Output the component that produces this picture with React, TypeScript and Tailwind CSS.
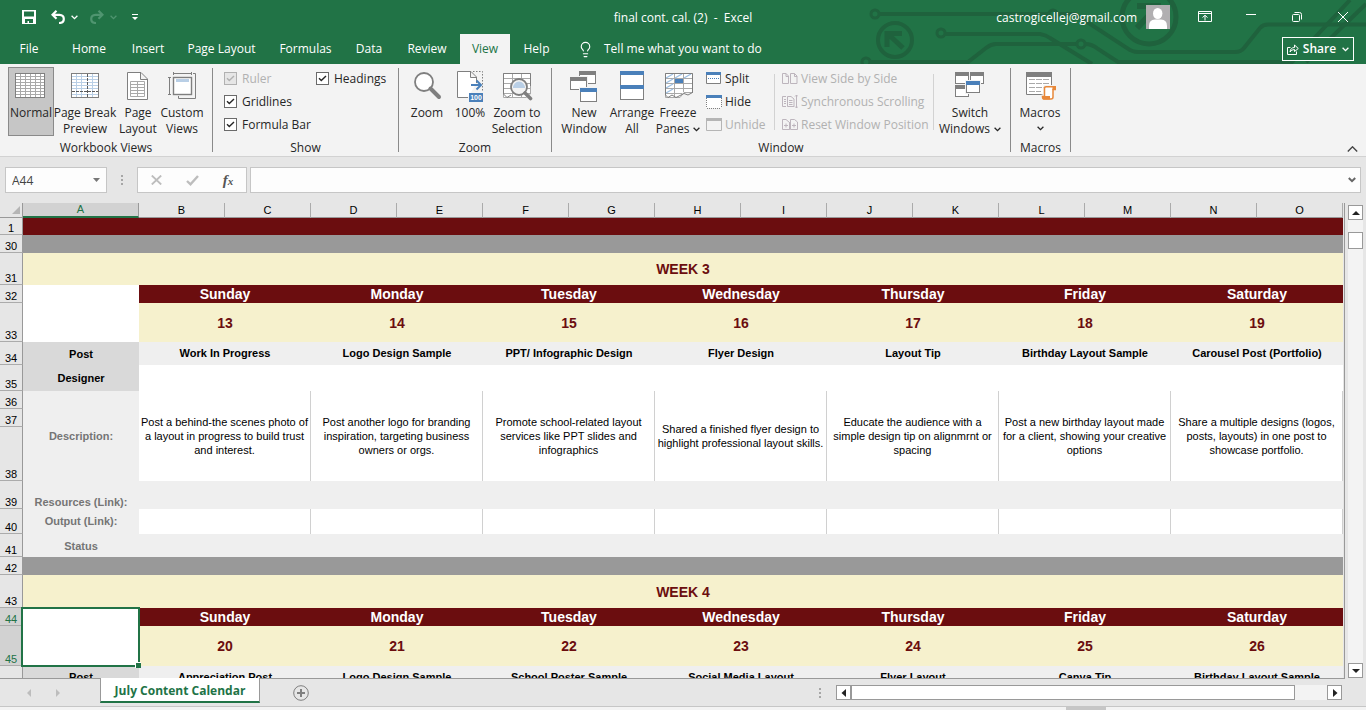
import React from 'react';
import { Lightbulb } from 'lucide-react';

const TABS = [
  { name: 'File', width: 'w-[58px]' },
  { name: 'Home', width: 'w-[62px]' },
  { name: 'Insert', width: 'w-[56px]' },
  { name: 'Page Layout', width: 'w-[91px]' },
  { name: 'Formulas', width: 'w-[77px]' },
  { name: 'Data', width: 'w-[50px]' },
  { name: 'Review', width: 'w-[66px]' },
  { name: 'View', width: 'w-[50px]' },
  { name: 'Help', width: 'w-[53px]' },
];

const COLUMNS = ['B', 'C', 'D', 'E', 'F', 'G', 'H', 'I', 'J', 'K', 'L', 'M', 'N', 'O'];
const DAYS = ['Sunday', 'Monday', 'Tuesday', 'Wednesday', 'Thursday', 'Friday', 'Saturday'];

const WEEK3 = {
  dates: [13, 14, 15, 16, 17, 18, 19],
  posts: [
    'Work In Progress',
    'Logo Design Sample',
    'PPT/ Infographic Design',
    'Flyer Design',
    'Layout Tip',
    'Birthday Layout Sample',
    'Carousel Post (Portfolio)',
  ],
  descriptions: [
    'Post a behind-the scenes photo of\na layout in progress to build trust\nand interest.',
    'Post another logo for branding\ninspiration, targeting business\nowners or orgs.',
    'Promote school-related layout\nservices like PPT slides and\ninfographics',
    'Shared a finished flyer design to\nhighlight professional layout skills.',
    'Educate the audience with a\nsimple design tip on alignmrnt or\nspacing',
    'Post a new birthday layout made\nfor a client, showing your creative\noptions',
    'Share a multiple designs (logos,\nposts, layouts) in one post to\nshowcase portfolio.',
  ],
};

const WEEK4 = {
  dates: [20, 21, 22, 23, 24, 25, 26],
  posts: [
    'Appreciation Post',
    'Logo Design Sample',
    'School Poster Sample',
    'Social Media Layout',
    'Flyer Layout',
    'Canva Tip',
    'Birthday Layout Sample',
  ],
};

/* ---------- Icons ---------- */

const GRAY = '#7f7f7f';
const BLUE = '#4a80ba';

const Chevron = ({ className = '' }: { className?: string }) => (
  <svg viewBox="0 0 7 5" className={`w-[7px] h-[5px] inline-block shrink-0 ${className}`} fill="none" stroke="currentColor" strokeWidth="1.3">
    <path d="M.6 .8 3.5 3.7 6.4 .8" />
  </svg>
);

const Icon32 = ({ children }: { children: React.ReactNode }) => (
  <svg viewBox="0 0 32 32" className="w-8 h-8 shrink-0" fill="none" stroke={GRAY}>
    {children}
  </svg>
);

const NormalIcon = () => (
  <Icon32>
    <rect x=".5" y="3.5" width="29" height="24" fill="#fff" />
    <path stroke="#a9a9a9" d="M1 6.5H29M1 9.5H29M1 12.5H29M1 15.5H29M1 18.5H29M1 21.5H29M1 24.5H29M5.5 4V27M10.5 4V27M15.5 4V27M20.5 4V27M25.5 4V27" />
    <rect x=".5" y="3.5" width="29" height="24" />
  </Icon32>
);

const PageBreakIcon = () => (
  <Icon32>
    <rect x="2.5" y="3.5" width="27" height="24" fill="#fff" />
    <path stroke="#b9cfe6" d="M3 6.5H29M3 9.5H29M3 12.5H29M3 15.5H29M3 18.5H29M3 24.5H29M7.5 4V27M12.5 4V27M23.5 4V27" />
    <path stroke="#5b5b5b" strokeDasharray="3 1" d="M18.5 4V27M3 21.5H29" />
    <rect x="2.5" y="3.5" width="27" height="24" />
  </Icon32>
);

const PageLayoutIcon = () => (
  <Icon32>
    <path fill="#fff" d="M5.5 2.5H19L25.5 9V29.5H5.5ZM18.5 2.5V9.5H25.5" />
    <path stroke="#a9a9a9" d="M8.5 11.5H22.5V26.5H8.5ZM8.5 14.5H22.5M8.5 17.5H22.5M8.5 20.5H22.5M8.5 23.5H22.5M15.5 11V27" />
  </Icon32>
);

const CustomViewsIcon = () => (
  <Icon32>
    <path d="M2 7.5H5M3.5 7.5V24.5M2 24.5H5M7.5 2V5M7.5 3.5H25.5M25.5 2V5" />
    <rect x="7.5" y="7.5" width="18" height="17" fill="#fff" strokeWidth="1.4" />
    <path fill="#b9cfe6" stroke="none" d="M10 9H23V12H10Z" />
    <path d="M27 3.5H29.5V28.5H12.5V26" />
  </Icon32>
);

const ZoomIcon = () => (
  <Icon32>
    <circle cx="13" cy="12" r="9" fill="#fff" strokeWidth="1.8" />
    <path d="M19.5 18.5 28 27" strokeWidth="4" strokeLinecap="round" />
  </Icon32>
);

const HundredIcon = () => (
  <Icon32>
    <path fill="#fff" d="M14 27.5H3.5V1.5H17L22.5 7V13M16.5 1.5V7.5H22.5" />
    <path strokeDasharray="1.5 1.5" d="M19 1.5H28.5V22" />
    <path stroke={BLUE} strokeWidth="2" d="M17 15H27M22.5 10.5 27 15 22.5 19.5" />
    <rect x="15" y="23" width="14" height="9" fill={BLUE} stroke="none" />
    <text x="22" y="30" textAnchor="middle" fill="#fff" stroke="none" fontSize="7" fontWeight="700" fontFamily="Liberation Sans, sans-serif">
      100
    </text>
  </Icon32>
);

const ZoomSelectionIcon = () => (
  <Icon32>
    <path fill="#fff" stroke="#a9a9a9" d="M2.5 3.5H29.5V24L25 27.5H2.5ZM3 8.5H29M3 13.5H29M3 18.5H29M3 23.5H29M11.5 4V27M20.5 4V27" />
    <path d="M2.5 24V3.5H29.5V16M2.5 24 6 27.5 10 25" />
    <circle cx="18" cy="17" r="8" fill="#f3f3f3" strokeWidth="1.8" />
    <path fill="#b9cfe6" stroke="none" d="M12 18A6 6.5 0 0 1 24 18Z" />
    <path d="M24 23 29.5 28.5" strokeWidth="3.6" strokeLinecap="round" />
  </Icon32>
);

const MiniWindow = ({ x, y, w = 17, h = 13, bar = GRAY }: { x: number; y: number; w?: number; h?: number; bar?: string }) => (
  <>
    <rect x={x - 1} y={y - 1} width={w + 2} height={h + 2} fill="#f3f3f3" stroke="none" />
    <rect x={x + 0.5} y={y + 0.5} width={w - 1} height={h - 1} fill="#fff" />
    <rect x={x} y={y} width={w} height="4" fill={bar} stroke="none" />
  </>
);

const NewWindowIcon = () => (
  <Icon32>
    <MiniWindow x={11} y={1} />
    <MiniWindow x={2} y={7} />
    <MiniWindow x={12} y={18} bar={BLUE} h={14} />
  </Icon32>
);

const ArrangeIcon = () => (
  <Icon32>
    <rect x="4.5" y="1.5" width="23" height="28" fill="#fff" />
    <path fill={BLUE} stroke="none" d="M4 1H28V5H4ZM4 15H28V19H4Z" />
  </Icon32>
);

const FreezeIcon = () => (
  <Icon32>
    <path fill="#fff" stroke="#a9a9a9" d="M3.5 3.5H30.5V22.5H22L18 27.5H3.5ZM4 8.5H30M4 13.5H30M4 18.5H30M4 23.5H20M12.5 4V27M21.5 4V22" />
    <path stroke="#9dbfe2" strokeWidth="1.4" d="M4 8 11 4M13 8 20 4M22 8 29 4M4 13 11 9M4 18 11 14M4 23 11 19" />
    <path fill={BLUE} stroke="none" d="M13 9H21V13H13Z" />
    <path d="M3.5 25V3.5H30.5V23M3.5 25 6 27.5 10 25 14 27.5 22 23.5 26 25 30.5 22.5" />
  </Icon32>
);

const SwitchIcon = () => (
  <Icon32>
    <MiniWindow x={1} y={2} w={14} h={12} />
    <MiniWindow x={16} y={2} w={14} h={12} />
    <MiniWindow x={1} y={15} w={14} h={12} />
    <MiniWindow x={12} y={11} w={14} h={12} bar={BLUE} />
  </Icon32>
);

const MacrosIcon = () => (
  <Icon32>
    <path fill="#fff" d="M2.5 2.5H27.5V24.5H2.5Z" />
    <path fill={GRAY} stroke="none" d="M2 2H28V7H2Z" />
    <path stroke="#a9a9a9" strokeDasharray="6 1" d="M5 9.5H25M5 13.5H25M5 17.5H20M5 21.5H17" />
    <path stroke="#f3f3f3" strokeWidth="3" fill="#fff" d="M21 16.5H31V20H30V29H19V26H20Z" />
    <path stroke="#e8883a" strokeWidth="1.5" fill="#fff" d="M22 16.8H31.2V19.5H29V27Q29 29 27 29H20Q18.5 29 18.5 26.5H20.5V18Q20.5 16.8 22 16.8Z" />
    <path fill="#e8883a" stroke="none" d="M18 26H26V29.5H19ZM28.5 16H32V20H28.5Z" />
  </Icon32>
);

const Icon16 = ({ children }: { children: React.ReactNode }) => (
  <svg viewBox="0 0 16 16" className="w-4 h-4 shrink-0" fill="none" stroke={GRAY}>
    {children}
  </svg>
);

const SplitIcon = () => (
  <Icon16>
    <path fill="#fff" d="M.5 1.5H14.5V12.5H.5Z" />
    <path fill={BLUE} stroke="none" d="M0 1H15V4H0Z" />
    <path stroke={BLUE} strokeDasharray="1 1" d="M2 7.5H14" />
  </Icon16>
);

const HideIcon = () => (
  <Icon16>
    <path fill="#fff" stroke="none" d="M0 3H15V14H0Z" />
    <path strokeDasharray="1 1" d="M.5 4V14M1 14.5H15M15.5 4V14" />
    <path fill={BLUE} stroke="none" d="M0 1H16V4H0Z" />
  </Icon16>
);

const UnhideIcon = () => (
  <Icon16>
    <path stroke="#b5b5b5" d="M.5 1.5H15.5V13.5H.5Z" />
    <path fill="#b5b5b5" stroke="none" d="M0 1H16V4H0Z" />
  </Icon16>
);

const SideBySideIcon = () => (
  <Icon16>
    <path stroke="#bdb5bd" d="M.5 2.5H4L6.5 5V12.5H.5ZM4 2.5V5.5H6.5M8.5 2.5H12.5L15 5V12.5H8.5ZM12.5 2.5V5.5H15" />
  </Icon16>
);

const SyncScrollIcon = () => (
  <Icon16>
    <path stroke="#bdb5bd" d="M4 2.5H.5V12.5H4M2 5.5H4M2 7.5H4M2 9.5H4M5.5 2.5H9L12 5V12.5H5.5ZM7 6.5H10.5M7 8.5H10.5M7 10.5H10.5M14.5 1V14M13 2.5 14.5 1 16 2.5M13 12.5 14.5 14 16 12.5" />
  </Icon16>
);

const ResetPositionIcon = () => (
  <Icon16>
    <path stroke="#bdb5bd" d="M.5 2.5H4L7.5 5.5V12.5H.5ZM7.500 12.500V5M8.5 2.5H12.5L15.5 5V12.5H8.5ZM2 8.500H6M4 6.500V10.500M10 8.500H14M12 6.500V10.500" />
  </Icon16>
);

/* ---------- Title bar ---------- */

const Circuit = () => (
  <svg viewBox="0 0 516 64" className="absolute right-0 top-0 w-[516px] h-16" fill="none" stroke="#1f623d" strokeWidth="4">
    <circle cx="25" cy="14" r="4" strokeWidth="3" />
    <path d="M29 14H199" />
    <circle cx="203" cy="14" r="4" strokeWidth="3" />
    <path d="M207 14H225L277 48Q282 52 288 52H385Q391 52 394 48L410 28Q413 24.500 418 24.500H516" />
    <circle cx="91" cy="33" r="4" strokeWidth="3" />
    <path d="M95 34H190Q196 35 200 38L242 64" />
    <circle cx="16" cy="62" r="4" strokeWidth="3" />
    <path d="M20 62H118L136 48Q141 44 146 44H226" />
    <circle cx="231" cy="44" r="4" strokeWidth="3" />
    <path d="M235 44Q242 44 248 49L268 62H442L500 0M456 62 516 4" />
    <circle cx="45" cy="40" r="17" />
    <path strokeWidth="5" d="M37 47V33.500H52M38 34 53 48" />
    <circle cx="299" cy="17" r="27" strokeWidth="5" />
    <path strokeWidth="6" d="M287 6H308V22M307 7 287 28" />
  </svg>
);

const TitleBar = () => (
  <header className="relative bg-[#217346] text-white shrink-0">
    <Circuit />
    <div className="relative grid grid-cols-[1fr_auto_1fr] h-[34px] items-center">
      <div className="flex items-center pl-[22px]">
        <button aria-label="Save">
          <svg viewBox="0 0 14 14" className="w-3.5 h-3.5" fill="currentColor" fillRule="evenodd">
            <path d="M0 0H14V14H0ZM2 1.500V6.500H12V1.500ZM3 9V13H5.500V11H7V13H11V9Z" />
          </svg>
        </button>
        <button aria-label="Undo" className="flex items-center gap-1.5 ml-[15px]">
          <svg viewBox="0 0 14 14" className="w-3.5 h-3.5" fill="none" stroke="currentColor" strokeWidth="2.200">
            <path d="M5.500 .8 1.500 4.800 5.500 8.800M1.500 4.800H8.500Q12.800 5 12.800 9T8 13" />
          </svg>
          <Chevron />
        </button>
        <button aria-label="Redo" className="flex items-center gap-1.5 ml-3 text-[#4f9570]">
          <svg viewBox="0 0 14 14" className="w-3.5 h-3.5" fill="none" stroke="currentColor" strokeWidth="2.200">
            <path d="M8.500 .8 12.500 4.800 8.500 8.800M12.500 4.800H5.500Q1.200 5 1.200 9T6 13" />
          </svg>
          <Chevron />
        </button>
        <button aria-label="Customize Quick Access Toolbar" className="ml-[15px]">
          <svg viewBox="0 0 6 6" className="w-1.5 h-1.5" fill="currentColor">
            <path d="M0 0H6V1H0ZM0 3H6L3 6Z" />
          </svg>
        </button>
      </div>
      <div className="pt-0.5 whitespace-pre">final cont. cal. (2)  -  Excel</div>
      <div className="flex items-center justify-end">
        <span className="pt-0.5">castrogicellej@gmail.com</span>
        <svg viewBox="0 0 24 24" className="w-6 h-6 ml-[9px] mr-3" fill="#fff">
          <rect width="24" height="24" fill="#b1afb1" />
          <ellipse cx="11.700" cy="8.500" rx="4.700" ry="5.500" />
          <path d="M3 24V21Q3 14.500 9 14.500H15Q21 14.500 21 21V24Z" />
        </svg>
        <button aria-label="Ribbon Display Options" className="w-[46px] flex justify-center">
          <svg viewBox="0 0 14 12" className="w-3.5 h-3" fill="none" stroke="currentColor">
            <path d="M.5 .5H13.500V10.500H.5ZM.5 2.500H13.500M7 9.500V4.500M4.500 6.500 7 4.300 9.500 6.500" />
          </svg>
        </button>
        <button aria-label="Minimize" className="w-[46px] flex justify-center">
          <svg viewBox="0 0 10 10" className="w-2.5 h-2.5" stroke="currentColor">
            <path d="M0 2.500H10" />
          </svg>
        </button>
        <button aria-label="Restore" className="w-[46px] flex justify-center">
          <svg viewBox="0 0 10 10" className="w-2.5 h-2.5" fill="none" stroke="currentColor">
            <rect x=".5" y="2.500" width="7" height="7" rx="1" />
            <path d="M2.500 .5H7.500Q9.500 .5 9.500 2.500V7.500" />
          </svg>
        </button>
        <button aria-label="Close" className="w-[46px] flex justify-center">
          <svg viewBox="0 0 10 10" className="w-2.5 h-2.5" stroke="currentColor">
            <path d="M0 0 10 10M10 0 0 10" />
          </svg>
        </button>
      </div>
    </div>

    <nav className="relative flex h-[30px] items-stretch">
      {TABS.map((tab) => (
        <button
          key={tab.name}
          className={`${tab.width} flex items-center justify-center whitespace-nowrap ${tab.name === 'View' ? 'bg-[#f3f3f3] text-[#217346]' : ''}`}
        >
          {tab.name}
        </button>
      ))}
      <button className="flex items-center gap-2.5 ml-3.5">
        <Lightbulb size={17} strokeWidth={1.6} />
        Tell me what you want to do
      </button>
      <button className="flex items-center justify-center gap-1 h-6 w-[72px] mt-[3px] mr-3 ml-auto border border-white bg-[#217346] font-semibold">
        <svg viewBox="0 0 12 12" className="w-3 h-3" fill="none" stroke="currentColor">
          <path d="M3.500 4.500H.5V11.500H9.500V8.500M3 9Q3.500 4.500 7.500 4.500V2L11.300 5.500 7.500 8.500V6.500Q4.500 6.500 3 9Z" />
        </svg>
        Share
        <Chevron className="ml-0.5" />
      </button>
    </nav>
  </header>
);

/* ---------- Ribbon ---------- */

interface BigButtonProps {
  icon: React.ReactNode;
  lines: string[];
  width: string;
  active?: boolean;
  menu?: boolean;
}

const BigButton = ({ icon, lines, width, active, menu }: BigButtonProps) => (
  <button
    className={`${width} h-[69px] pt-0.5 border flex flex-col items-center whitespace-nowrap leading-4 ${
      active ? 'bg-[#c6c6c6] border-[#8a8a8a]' : 'border-transparent'
    }`}
  >
    {icon}
    <span className="mt-[3px]">{lines[0]}</span>
    {(lines[1] || menu) && (
      <span className="flex items-center gap-1 h-4">
        {lines[1]}
        {menu && <Chevron />}
      </span>
    )}
  </button>
);

const SmallButton = ({ icon, label, disabled }: { icon: React.ReactNode; label: string; disabled?: boolean }) => (
  <button disabled={disabled} className="flex items-center gap-[3px] h-[23px] whitespace-nowrap disabled:text-[#b1b1b1]">
    {icon}
    {label}
  </button>
);

const CheckOption = ({ label, disabled }: { label: string; disabled?: boolean }) => (
  <label className={`flex items-center gap-[5px] h-[23px] whitespace-nowrap ${disabled ? 'text-[#b1b1b1]' : ''}`}>
    <span className="grid size-[13px]">
      <input
        type="checkbox"
        defaultChecked
        disabled={disabled}
        className="peer col-start-1 row-start-1 appearance-none size-[13px] border border-[#6a6a6a] bg-white disabled:border-[#b1b1b1] disabled:bg-[#e6e6e6]"
      />
      <svg
        viewBox="0 0 13 13"
        className="hidden peer-checked:block pointer-events-none col-start-1 row-start-1 size-[13px]"
        fill="none"
        stroke="currentColor"
        strokeWidth="1.4"
      >
        <path d="M3 6.300 5.300 8.600 10 4" />
      </svg>
    </span>
    {label}
  </label>
);

const Group = ({ label, width, children }: { label: string; width: string; children: React.ReactNode }) => (
  <section className={`${width} flex shrink-0`}>
    <div className="flex-1 min-w-0 flex flex-col pt-[3px]">
      <div className="flex h-[69px] mb-1">{children}</div>
      <div className="text-center leading-4">{label}</div>
    </div>
    <div className="w-px h-[84px] mt-1 bg-[#8a8a8a]" />
  </section>
);

const Ribbon = () => (
  <div className="flex h-[93px] shrink-0 bg-[#f3f3f3] border-b border-[#d2d2d2] text-[#262626] overflow-hidden">
    <Group label="Workbook Views" width="w-[213px]">
      <div className="flex pl-2">
        <BigButton icon={<NormalIcon />} lines={['Normal']} width="w-[46px]" active />
        <BigButton icon={<PageBreakIcon />} lines={['Page Break', 'Preview']} width="w-[62px]" />
        <BigButton icon={<PageLayoutIcon />} lines={['Page', 'Layout']} width="w-[44px]" />
        <BigButton icon={<CustomViewsIcon />} lines={['Custom', 'Views']} width="w-[44px]" />
      </div>
    </Group>
    <Group label="Show" width="w-[186px]">
      <div className="grid grid-flow-col grid-rows-3 grid-cols-[92px_auto] pl-[11px]">
        <CheckOption label="Ruler" disabled />
        <CheckOption label="Gridlines" />
        <CheckOption label="Formula Bar" />
        <CheckOption label="Headings" />
      </div>
    </Group>
    <Group label="Zoom" width="w-[153px]">
      <div className="flex pl-[5px]">
        <BigButton icon={<ZoomIcon />} lines={['Zoom']} width="w-[46px]" />
        <BigButton icon={<HundredIcon />} lines={['100%']} width="w-[40px]" />
        <BigButton icon={<ZoomSelectionIcon />} lines={['Zoom to', 'Selection']} width="w-[54px]" />
      </div>
    </Group>
    <Group label="Window" width="w-[459px]">
      <div className="flex pl-2">
        <BigButton icon={<NewWindowIcon />} lines={['New', 'Window']} width="w-[48px]" />
        <BigButton icon={<ArrangeIcon />} lines={['Arrange', 'All']} width="w-[48px]" />
        <BigButton icon={<FreezeIcon />} lines={['Freeze', 'Panes']} width="w-[44px]" menu />
        <div className="w-[74px] pl-1.5">
          <SmallButton icon={<SplitIcon />} label="Split" />
          <SmallButton icon={<HideIcon />} label="Hide" />
          <SmallButton icon={<UnhideIcon />} label="Unhide" disabled />
        </div>
        <div className="w-px h-[56px] mt-[7px] bg-[#d2d2d2]" />
        <div className="w-[158px] pl-[7px]">
          <SmallButton icon={<SideBySideIcon />} label="View Side by Side" disabled />
          <SmallButton icon={<SyncScrollIcon />} label="Synchronous Scrolling" disabled />
          <SmallButton icon={<ResetPositionIcon />} label="Reset Window Position" disabled />
        </div>
        <div className="w-px h-[56px] mt-[7px] mr-1 bg-[#d2d2d2]" />
        <BigButton icon={<SwitchIcon />} lines={['Switch', 'Windows']} width="w-[64px]" menu />
      </div>
    </Group>
    <Group label="Macros" width="w-[60px]">
      <div className="flex pl-[7px]">
        <BigButton icon={<MacrosIcon />} lines={['Macros']} width="w-[44px]" menu />
      </div>
    </Group>
    <button aria-label="Collapse the Ribbon" className="ml-auto mr-2 mb-1 self-end">
      <svg viewBox="0 0 11 6" className="w-[11px] h-1.5" fill="none" stroke="#444" strokeWidth="1.4">
        <path d="M.8 5.400 5.500 .8 10.200 5.400" />
      </svg>
    </button>
  </div>
);

/* ---------- Formula bar ---------- */

const Dots = () => (
  <svg viewBox="0 0 2 10" className="w-0.5 h-2.5 shrink-0" fill="#a6a6a6">
    <path d="M0 0H2V2H0ZM0 4H2V6H0ZM0 8H2V10H0Z" />
  </svg>
);

const FormulaBar = () => (
  <div className="flex items-center shrink-0 h-[46px] pl-[5px] pr-[5px]">
    <div className="flex items-center w-[102px] h-[26px] border border-[#c6c6c6] bg-[#fdfdfd]">
      <input aria-label="Name Box" defaultValue="A44" className="flex-1 min-w-0 pl-1.5 pt-0.5 text-[#444] outline-none" />
      <button aria-label="Name list" className="mr-1.5">
        <svg viewBox="0 0 7 4" className="w-[7px] h-1" fill="#777">
          <path d="M0 0H7L3.500 4Z" />
        </svg>
      </button>
    </div>
    <div className="w-[30px] flex justify-center">
      <Dots />
    </div>
    <div className="flex items-center w-[110px] h-[26px] mr-[3px] border border-[#c6c6c6] bg-[#fdfdfd]">
      <button aria-label="Cancel" className="flex-1 flex justify-center">
        <svg viewBox="0 0 11 10" className="w-[11px] h-2.5" stroke="#bdbdbd" strokeWidth="1.800">
          <path d="M.8 .5 10.200 9.500M10.200 .5 .8 9.500" />
        </svg>
      </button>
      <button aria-label="Enter" className="flex-1 flex justify-center">
        <svg viewBox="0 0 13 11" className="w-[13px] h-[11px]" fill="none" stroke="#bdbdbd" strokeWidth="2.400">
          <path d="M1 6 4.500 9.300 12 1" />
        </svg>
      </button>
      <button aria-label="Insert Function" className="flex-1 font-['Liberation_Serif',serif] italic font-bold text-[#555] leading-none">
        <span className="text-[15px]">f</span>
        <span className="text-[11px]">x</span>
      </button>
    </div>
    <div className="flex flex-1 items-center h-[26px] border border-[#c6c6c6] bg-[#fdfdfd]">
      <input aria-label="Formula Bar" className="flex-1 min-w-0 px-2 outline-none" />
      <button aria-label="Expand Formula Bar" className="mr-1">
        <svg viewBox="0 0 8 6" className="w-2 h-1.5" fill="none" stroke="#666" strokeWidth="2">
          <path d="M.8 1 4 4.200 7.200 1" />
        </svg>
      </button>
    </div>
  </div>
);

/* ---------- Sheet ---------- */

const RowNumber = ({ n, height, selected }: { n: number; height: string; selected?: boolean }) => (
  <th
    scope="row"
    className={`${height} border-r border-b border-r-[#999] border-b-[#ababab] align-bottom font-normal leading-3 ${
      selected ? 'bg-[#d2d2d2] text-[#217346]' : 'bg-[#e6e6e6] text-black'
    }`}
  >
    {n}
  </th>
);

const FullRow = ({ n, height, className, children }: { n: number; height: string; className: string; children?: React.ReactNode }) => (
  <tr>
    <RowNumber n={n} height={height} />
    <td colSpan={15} className={className}>
      {children}
    </td>
  </tr>
);

const DayNames = () =>
  DAYS.map((day) => (
    <td key={day} colSpan={2} className="bg-[#6b0d0f] text-white text-sm font-bold leading-4">
      {day}
    </td>
  ));

const Dates = ({ dates }: { dates: number[] }) =>
  dates.map((date) => (
    <td key={date} colSpan={2} className="bg-[#f6f1cd] text-[#6b0d0f] text-sm font-bold">
      {date}
    </td>
  ));

const Posts = ({ posts }: { posts: string[] }) =>
  posts.map((post) => (
    <td key={post} colSpan={2} className="pb-0.5 bg-[#efefef] font-bold whitespace-nowrap">
      {post}
    </td>
  ));

const SIDE = 'bg-[#efefef] text-[#757575] font-bold';

const Sheet = () => (
  <table className="w-full table-fixed border-separate border-spacing-0 text-center text-[11px] leading-[14px] text-black font-['Liberation_Sans',Arial,sans-serif]">
    <colgroup>
      <col className="w-[23px]" />
      <col className="w-[116px]" />
      {COLUMNS.map((c) => (
        <col key={c} />
      ))}
    </colgroup>
    <thead>
      <tr className="bg-[#e6e6e6]">
        <th className="h-[15px] border-r border-b border-[#999]">
          <svg viewBox="0 0 8 8" className="w-2 h-2 ml-auto mr-0.5" fill="#b5b5b5">
            <path d="M8 0V8H0Z" />
          </svg>
        </th>
        <th scope="col" className="bg-[#d2d2d2] text-[#217346] font-normal leading-[13px] border-r border-r-[#999] border-b-2 border-b-[#217346]">
          A
        </th>
        {COLUMNS.map((c) => (
          <th key={c} scope="col" className="font-normal leading-[14px] border-r border-b border-r-[#ababab] border-b-[#999]">
            {c}
          </th>
        ))}
      </tr>
    </thead>
    <tbody>
      <FullRow n={1} height="h-[17px]" className="bg-[#6b0d0f]" />
      <FullRow n={30} height="h-[18px]" className="bg-[#999]" />
      <FullRow n={31} height="h-[32px]" className="bg-[#f6f1cd] text-[#6b0d0f] text-sm font-bold">
        WEEK 3
      </FullRow>
      <tr>
        <RowNumber n={32} height="h-[18px]" />
        <td rowSpan={2} className="bg-white" />
        <DayNames />
      </tr>
      <tr>
        <RowNumber n={33} height="h-[39px]" />
        <Dates dates={WEEK3.dates} />
      </tr>
      <tr>
        <RowNumber n={34} height="h-[23px]" />
        <td className="bg-[#d9d9d9] font-bold">Post</td>
        <Posts posts={WEEK3.posts} />
      </tr>
      <tr>
        <RowNumber n={35} height="h-[26px]" />
        <td className="bg-[#d9d9d9] font-bold">Designer</td>
        <td colSpan={14} className="bg-white" />
      </tr>
      <tr>
        <RowNumber n={36} height="h-[18px]" />
        <td rowSpan={3} className={SIDE}>
          Description:
        </td>
        {WEEK3.descriptions.map((text) => (
          <td key={text} rowSpan={3} colSpan={2} className="bg-white border-r border-[#d0d0d0] whitespace-pre">
            {text}
          </td>
        ))}
      </tr>
      <tr>
        <RowNumber n={37} height="h-[18px]" />
      </tr>
      <tr>
        <RowNumber n={38} height="h-[54px]" />
      </tr>
      <tr>
        <RowNumber n={39} height="h-[28px]" />
        <td className={`${SIDE} align-bottom`}>Resources (Link):</td>
        <td colSpan={14} className="bg-[#efefef]" />
      </tr>
      <tr>
        <RowNumber n={40} height="h-[25px]" />
        <td className={`${SIDE} pb-0.5`}>Output (Link):</td>
        {DAYS.map((day) => (
          <td key={day} colSpan={2} className="bg-white border-r border-[#d0d0d0]" />
        ))}
      </tr>
      <tr>
        <RowNumber n={41} height="h-[23px]" />
        <td className={SIDE}>Status</td>
        <td colSpan={14} className="bg-[#efefef]" />
      </tr>
      <FullRow n={42} height="h-[18px]" className="bg-[#999]" />
      <FullRow n={43} height="h-[33px]" className="bg-[#f6f1cd] text-[#6b0d0f] text-sm font-bold">
        WEEK 4
      </FullRow>
      <tr>
        <RowNumber n={44} height="h-[18px]" selected />
        <td rowSpan={2} className="relative bg-white">
          {/* selection frame and fill handle */}
          <div className="absolute -top-px -left-0.5 -right-px -bottom-px z-10 border-2 border-[#217346]">
            <span className="absolute -right-[3px] -bottom-[3px] size-1.5 bg-[#217346] border-t border-l border-white" />
          </div>
        </td>
        <DayNames />
      </tr>
      <tr>
        <RowNumber n={45} height="h-[40px]" selected />
        <Dates dates={WEEK4.dates} />
      </tr>
      <tr>
        <RowNumber n={46} height="h-[23px]" />
        <td className="pb-0.5 bg-[#d9d9d9] font-bold">Post</td>
        <Posts posts={WEEK4.posts} />
      </tr>
    </tbody>
  </table>
);

/* ---------- Bottom bar and scroll bars ---------- */

const ScrollButton = ({ label, d }: { label: string; d: string }) => (
  <button aria-label={label} className="size-[15px] shrink-0 flex items-center justify-center border border-[#999] bg-white">
    <svg viewBox="0 0 8 8" className="w-2 h-2" fill="#222">
      <path d={d} />
    </svg>
  </button>
);

const SheetTabs = () => (
  <div className="flex h-7 shrink-0 border-t border-[#999]">
    <div className="w-[100px] flex items-center justify-between pl-[27px] pr-10">
      <button aria-label="Previous sheet">
        <svg viewBox="0 0 4 8" className="w-1 h-2" fill="#bdbdbd">
          <path d="M4 0V8L0 4Z" />
        </svg>
      </button>
      <button aria-label="Next sheet">
        <svg viewBox="0 0 4 8" className="w-1 h-2" fill="#bdbdbd">
          <path d="M0 0V8L4 4Z" />
        </svg>
      </button>
    </div>
    <button className="w-40 h-[25px] -mt-px pt-[3px] flex items-center justify-center whitespace-nowrap bg-white border-x border-x-[#999] border-b-2 border-b-[#217346] text-[#217346] font-bold">
      July Content Calendar
    </button>
    <button aria-label="New sheet" className="ml-[33px]">
      <svg viewBox="0 0 16 16" className="w-4 h-4" fill="none" stroke="#7f7f7f">
        <circle cx="8" cy="8" r="7.300" />
        <path strokeWidth="2" d="M8 4V12M4 8H12" />
      </svg>
    </button>
    <div className="flex items-center ml-auto mr-[3px]">
      <Dots />
      <div className="flex w-[506px] h-[15px] ml-[15px] bg-[#f3f3f3]">
        <ScrollButton label="Scroll left" d="M6 0V8L1.500 4Z" />
        <div className="w-[444px] border border-[#999] bg-white" />
        <div className="flex-1" />
        <ScrollButton label="Scroll right" d="M2 0V8L6.500 4Z" />
      </div>
    </div>
  </div>
);

export default function App() {
  return (
    <div className="flex flex-col h-screen overflow-hidden bg-[#e6e6e6] text-xs font-['Open_Sans','Noto_Sans',sans-serif]">
      <TitleBar />
      <Ribbon />
      <FormulaBar />
      <main className="flex flex-1 min-h-0">
        <div className="flex flex-col flex-1 min-w-0">
          <div className="flex-1 min-h-0 overflow-hidden pr-px border-r border-[#999]">
            <Sheet />
          </div>
          <SheetTabs />
        </div>
        <div className="w-[21px] shrink-0 flex justify-center pt-0.5 pb-7">
          <div className="flex flex-col w-[15px] bg-[#f3f3f3]">
            <ScrollButton label="Scroll up" d="M0 6H8L4 2Z" />
            <div className="h-[17px] mt-3 border border-[#999] bg-white" />
            <div className="flex-1" />
            <ScrollButton label="Scroll down" d="M0 2H8L4 6Z" />
          </div>
        </div>
      </main>
      <div className="flex justify-end h-1 shrink-0 border-t border-[#c6c6c6] bg-[#f3f3f3]">
        <div className="w-10 mr-[260px] bg-[#c6c6c6]" />
      </div>
    </div>
  );
}
